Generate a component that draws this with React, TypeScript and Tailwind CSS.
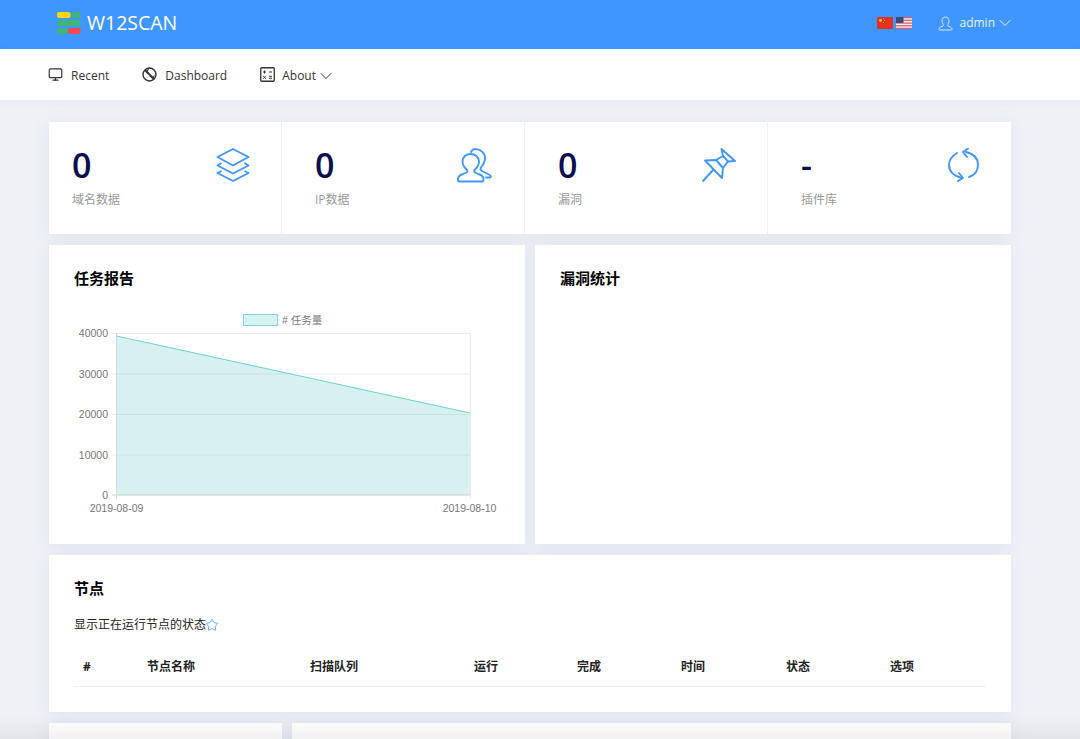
import { ChevronDown, Monitor, Star } from "lucide-react"

const sans = "font-['Open_Sans','Noto_Sans_CJK_SC',sans-serif]"

function LayersIcon() {
  return (
    <svg width="34" height="34" viewBox="0 0 34 34" fill="none" stroke="#3f96ff" strokeWidth="1.9" strokeLinejoin="round">
      <path d="M1.500 9 17 1l15.500 8L17 17.500z" />
      <path d="M5.500 15 1.500 17.500 17 25.500l15.500-8-4-2.500" />
      <path d="M5.500 23 1.500 25 17 33l15.500-8-4-2" />
    </svg>
  )
}

function PeopleIcon() {
  return (
    <svg width="36" height="35" viewBox="0 0 36 35" fill="none" stroke="#3f96ff" strokeWidth="1.900" strokeLinejoin="round" strokeLinecap="round">
      <path d="M1 31c0-3 2-4 5-5l3.500-1.500c1-.5 1-2 0-3C7 19 5.500 16 5.500 13.500 5.500 9 9 6 13.500 6S22 9 22 13.500c0 2.500-1.500 5.500-4 8-1 1-1 2.500 0 3l3.500 1.500c3 1 5 2 5 5v1a1.500 1.500 0 0 1-1.500 1.500H2.500A1.500 1.500 0 0 1 1 31.500z" />
      <path d="M14 4c1-2 2-3 4-3 5.500 0 10 4 10 9 0 4-2 7-4 9.500-1 1.500-.5 2.500 1 3.500l7 3.500c2 1 2.500 2.500 1 3h-4" />
    </svg>
  )
}

function PinIcon() {
  return (
    <svg width="34" height="34" viewBox="0 0 34 34" fill="none" stroke="#3f96ff" strokeWidth="1.900" strokeLinejoin="round" strokeLinecap="round">
      <path d="M19.500 1 33 13l-7 .5L21 8z" />
      <path d="M3 12.500 14 12l7 8-1 10z" />
      <path d="M14 12l7-4M21 20l5-6.500" />
      <path d="M11 22 1 33" />
    </svg>
  )
}

function RefreshIcon() {
  return (
    <svg width="32" height="34" viewBox="0 0 32 34" fill="none" stroke="#3f96ff" strokeWidth="1.900" strokeLinejoin="round" strokeLinecap="round">
      <path d="M9 5C4 8 1 12 1 17c0 7 5 11 13 13" />
      <path d="M11 25l4 5-5 3" />
      <path d="M18 4c8 2 12 7 12 13 0 6-3 10-9 12" />
      <path d="M20 .5 15 4l4 5" />
    </svg>
  )
}

function Logo() {
  return (
    <svg width="24" height="23" viewBox="0 0 24 23">
      <rect x="0" y="0" width="13.500" height="6" rx="2" fill="#ffd60a" />
      <rect x="14.500" y="0" width="9" height="6" rx="2.500" fill="#3fb57c" />
      <rect x="0" y="8" width="23.500" height="6" rx="2.500" fill="#3fb57c" />
      <rect x="0" y="16" width="10.500" height="6" rx="2.500" fill="#3fb57c" />
      <rect x="11" y="16" width="12.500" height="6" rx="2" fill="#f6484f" />
    </svg>
  )
}

function Flags() {
  return (
    <div className="flex items-center gap-[3px]">
      <svg width="16" height="12" viewBox="0 0 16 12">
        <rect width="16" height="12" fill="#e8301f" />
        <circle cx="3.500" cy="3.500" r="1.400" fill="#f7c52d" />
        <circle cx="6.500" cy="1.800" r=".5" fill="#f7c52d" />
        <circle cx="7.500" cy="3.300" r=".5" fill="#f7c52d" />
        <circle cx="6.500" cy="5.500" r=".5" fill="#f7c52d" />
      </svg>
      <svg width="16" height="12" viewBox="0 0 16 12">
        <rect width="16" height="12" fill="#f3f1f1" />
        <rect y="0" width="16" height="1.300" fill="#d9626a" />
        <rect y="2.700" width="16" height="1.300" fill="#d9626a" />
        <rect y="5.400" width="16" height="1.300" fill="#d9626a" />
        <rect y="8.100" width="16" height="1.300" fill="#d9626a" />
        <rect y="10.700" width="16" height="1.300" fill="#d9626a" />
        <rect width="7.500" height="6" fill="#3b4a78" />
      </svg>
    </div>
  )
}

function UserIcon() {
  return (
    <svg width="15" height="15" viewBox="0 0 15 15" fill="none" stroke="#d6e7ff" strokeWidth="1" strokeLinejoin="round">
      <path d="M1 13.500c0-1.500.8-2.200 2-2.700l2-.8c.6-.3.6-1 .2-1.500C4.400 7.500 4 6.300 4 5c0-2.300 1.400-4 3.500-4S11 2.700 11 5c0 1.300-.4 2.500-1.200 3.500-.4.500-.4 1.200.2 1.500l2 .8c1.200.5 2 1.200 2 2.700a.5.5 0 0 1-.5.500h-12a.5.5 0 0 1-.5-.5z" />
    </svg>
  )
}

function DashboardIcon() {
  return (
    <svg width="15" height="15" viewBox="0 0 15 15" fill="none" stroke="#333" strokeWidth="1.400">
      <circle cx="7.500" cy="7.500" r="6.500" />
      <path d="M3 3l9 9" strokeWidth="1.800" />
      <path d="M6.500 2 4.500 5.500 7 6.500M12.500 8.500 10.500 11 8 9" strokeWidth="1.100" />
    </svg>
  )
}

function AboutIcon() {
  return (
    <svg width="15" height="15" viewBox="0 0 15 15" fill="none" stroke="#333" strokeWidth="1">
      <rect x=".75" y=".75" width="13.500" height="13.500" rx="1" strokeWidth="1.300" />
      <path d="M3 5h3M4.500 3.500v3M9 5h3M3.200 9l2.600 2.600M5.800 9l-2.600 2.600M9 9.300h3M9 11.300h3" />
    </svg>
  )
}

function TaskChart() {
  const ticks = [
    { y: 333.500, label: "40000" },
    { y: 374, label: "30000" },
    { y: 414.500, label: "20000" },
    { y: 455, label: "10000" },
    { y: 495, label: "0" },
  ]
  return (
    <svg width="476" height="229" viewBox="49 290 476 229" className="block font-['Liberation_Sans','Noto_Sans_CJK_SC',sans-serif]">
      <rect x="243.500" y="314.500" width="34" height="11" fill="#d7f1f0" stroke="#7fd3d1" />
      <text x="282" y="323.500" fontSize="10.500" fill="#777">
        # 任务量
      </text>
      {ticks.map((t) => (
        <g key={t.label}>
          <line x1="112" x2="470" y1={t.y} y2={t.y} stroke="#ececec" />
          <text x="108" y={t.y + 3.500} fontSize="10.500" fill="#777" textAnchor="end">
            {t.label}
          </text>
        </g>
      ))}
      <line x1="116.500" x2="116.500" y1="333" y2="499" stroke="#e0e0e0" />
      <line x1="470.500" x2="470.500" y1="333" y2="499" stroke="#ececec" />
      <path d="M116.500 336 470 413V495H116.500z" fill="#5ec8c4" fillOpacity=".25" />
      <path d="M116.500 336 470 413" stroke="#6fd0cd" fill="none" />
      <line x1="112" x2="470" y1="495" y2="495" stroke="#cfd8d8" />
      <text x="116.500" y="511.500" fontSize="10.500" fill="#777" textAnchor="middle">
        2019-08-09
      </text>
      <text x="469.500" y="511.500" fontSize="10.500" fill="#777" textAnchor="middle">
        2019-08-10
      </text>
    </svg>
  )
}

const stats = [
  { value: "0", label: "域名数据", icon: LayersIcon },
  { value: "0", label: "IP数据", icon: PeopleIcon },
  { value: "0", label: "漏洞", icon: PinIcon },
  { value: "-", label: "插件库", icon: RefreshIcon },
]

const columns = [
  { label: "#", width: "w-[64px]" },
  { label: "节点名称", width: "w-[163px]" },
  { label: "扫描队列", width: "w-[164px]" },
  { label: "运行", width: "w-[103px]" },
  { label: "完成", width: "w-[104px]" },
  { label: "时间", width: "w-[105px]" },
  { label: "状态", width: "w-[104px]" },
  { label: "选项", width: "" },
]

const cardShadow = "bg-white shadow-[0_2px_16px_rgba(120,125,165,0.11)]"

export default function App() {
  return (
    <div className={`relative h-screen overflow-hidden bg-[#eff1f7] ${sans}`}>
      {/* Top bar */}
      <header className="flex h-[49px] items-center justify-between bg-[#3f96ff] pr-[69px] pb-[3px] pl-[57px]">
        <div className="flex items-center gap-[6px]">
          <Logo />
          <span className="text-[19.500px] leading-none text-white">W12SCAN</span>
        </div>
        <div className="flex items-center">
          <Flags />
          <div className="ml-[26px] flex items-center gap-[6px] text-xs text-[#e9f2ff]">
            <UserIcon />
            <span>admin</span>
            <ChevronDown size={20} strokeWidth={1.2} className="-mr-[4px] -ml-[6px]" />
          </div>
        </div>
      </header>

      {/* Nav */}
      <nav className="flex h-[51px] items-center gap-[33px] bg-white pl-[48px] text-xs text-[#333] shadow-[0_2px_10px_rgba(120,125,165,0.08)]">
        <div className="flex items-center gap-2">
          <Monitor size={15} strokeWidth={1.9} />
          <span className="mt-[2px]">Recent</span>
        </div>
        <div className="flex items-center gap-2">
          <DashboardIcon />
          <span className="mt-[2px]">Dashboard</span>
        </div>
        <div className="flex items-center gap-[7px]">
          <AboutIcon />
          <span className="mt-[2px] flex items-center">
            About
            <ChevronDown size={20} strokeWidth={1.2} className="-mr-[5px]" />
          </span>
        </div>
      </nav>

      <main className="ml-[49px] flex w-[962px] flex-col gap-[11px] pt-[22px]">
        {/* Stats */}
        <section className={`grid h-[112px] grid-cols-[233px_243px_243px_243px] ${cardShadow}`}>
          {stats.map((s, i) => {
            const Icon = s.icon
            return (
              <div
                key={s.label}
                className={`flex justify-between pt-[26px] pr-[31px] ${i === 0 ? "pl-[23px]" : "pl-[33px]"} ${i < 3 ? "border-r border-[#f0f1f5]" : ""}`}
              >
                <div>
                  <div className="-mt-[1px] h-[36px] text-[34px] leading-[36px] font-semibold text-[#0b0f4d]">{s.value}</div>
                  <div className="mt-[9px] text-xs text-[#999]">{s.label}</div>
                </div>
                <Icon />
              </div>
            )
          })}
        </section>

        {/* Chart and vuln stats */}
        <section className="grid grid-cols-2 gap-[10px]">
          <div className={`h-[299px] ${cardShadow}`}>
            <h3 className="pt-[23px] pl-[25px] text-[15px] leading-[20px] font-bold text-black">任务报告</h3>
            <div className="pt-[2px]">
              <TaskChart />
            </div>
          </div>
          <div className={`h-[299px] ${cardShadow}`}>
            <h3 className="pt-[23px] pl-[25px] text-[15px] leading-[20px] font-bold text-black">漏洞统计</h3>
          </div>
        </section>

        {/* Nodes */}
        <section className={`h-[157px] px-[25px] ${cardShadow}`}>
          <h3 className="pt-[23px] text-[15px] leading-[20px] font-bold text-black">节点</h3>
          <p className="mt-[18px] flex items-center text-xs leading-[18px] text-[#222]">
            显示正在运行节点的状态
            <Star size={14} strokeWidth={1.5} className="-mt-[1px] -ml-[1px] text-[#4f9fff]" />
          </p>
          <table className="mt-[14px] w-full table-fixed border-b border-[#f0f0f0]">
            <thead>
              <tr>
                {columns.map((c) => (
                  <th key={c.label} className={`h-[38px] pl-[9px] text-left text-xs font-bold text-[#222] ${c.width}`}>
                    {c.label}
                  </th>
                ))}
              </tr>
            </thead>
          </table>
        </section>

        {/* Next row, cut off by the window */}
        <section className="grid grid-cols-[233px_1fr] gap-[10px]">
          <div className={`h-[60px] ${cardShadow}`} />
          <div className={`h-[60px] ${cardShadow}`} />
        </section>
      </main>

      {/* Fade at the bottom edge */}
      <div className="pointer-events-none absolute right-0 bottom-0 left-0 h-[24px] bg-gradient-to-b from-transparent to-[rgba(0,0,0,0.05)]" />
    </div>
  )
}
